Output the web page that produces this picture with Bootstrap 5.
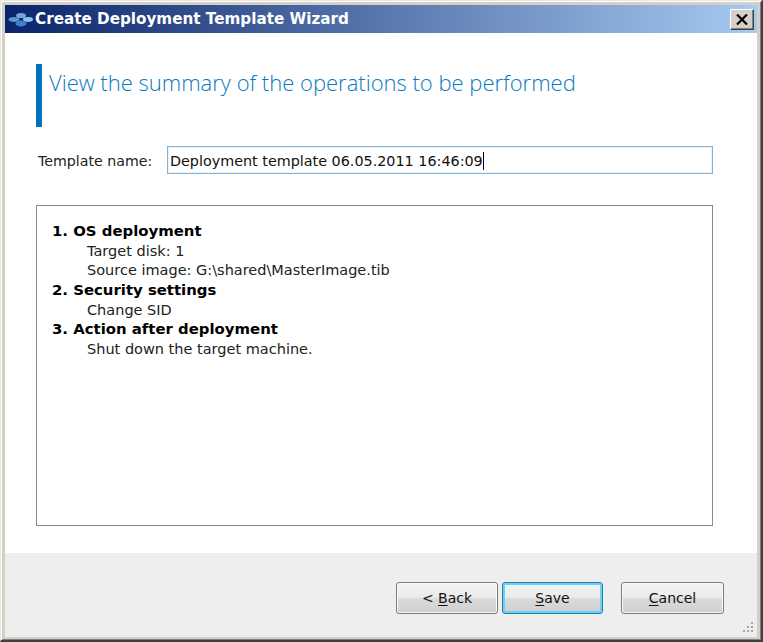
<!DOCTYPE html>
<html lang="en"><head><meta charset="utf-8"><title>Create Deployment Template Wizard</title>
<link href="https://cdn.jsdelivr.net/npm/bootstrap@5.3.0/dist/css/bootstrap.min.css" rel="stylesheet">
<style>
html,body{margin:0;padding:0;background:#d4d0c8;overflow:hidden}
body{font-family:"DejaVu Sans","Noto Sans",sans-serif;font-size:14.5px;color:#111}
.win-frame{width:763px;height:642px;display:flex;flex-direction:column;background:#d4d0c8;border-style:solid;border-width:1px 2px 2px 1px;border-color:#e8e6df #404040 #404040 #e8e6df;padding:4px 4px 3px 4px;box-shadow:inset 1px 1px 0 #fff,inset -1px -1px 0 #808080}
.title-bar{height:28px;flex:none;background:linear-gradient(90deg,#0a246a,#a6caf0);color:#fff;font-weight:700;font-size:15.2px;padding:1px 3px 0 2px}
.title-ico{width:27px;height:16px;flex:none;margin-right:1px}
.close-box{width:24px;height:21px;background:#d4d0c8;border:1px solid;border-color:#fff #404040 #404040 #fff;box-shadow:inset -1px -1px 0 #808080;padding:0;margin-top:-1px}
.wiz-body{flex:1;background:#fff;padding:31px 44px 0 31px;min-height:0}
.wiz-foot{height:84px;flex:none;background:#eee;padding:29px 33px 0 0}
.head-bar{border-left:6px solid #0072bc;height:63px;padding:2px 0 0 7px;font-family:"Open Sans","Noto Sans",sans-serif;font-size:22px;font-weight:300;color:#0a78c2;line-height:32px}
.name-row{margin-top:19px;height:28px;padding-left:2px}
.name-lab{width:129px;flex:none;font-size:14.2px;color:#222;padding-top:3px}
.name-wrap{flex:1;height:28px}
.name-inp{width:100%;height:28px;display:block;border:1px solid #7fb3d8;border-radius:0;padding:2px 2px 0;font:inherit;font-size:14.35px;color:#111;outline:0;box-shadow:inset 0 0 0 1px #eaf3fa;background:#fff}
.name-caret{left:316px;top:6px;width:1px;height:18px;background:#000}
.sum-box{margin-top:31px;height:321px;border:1px solid #8a8a8a;padding:16px 15px;line-height:19.7px;font-size:14.5px;color:#222}
.sum-h{font-weight:700;color:#000;font-size:14.9px}
.sum-i{padding-left:35px;line-height:18px;padding-bottom:1.7px}
.wiz-btn{width:102px;height:32px;border:1px solid #7a7a7a;border-radius:3px;background:linear-gradient(#f3f3f3 0,#ebebeb 48%,#dcdcdc 50%,#cfcfcf 100%);font-size:14px;color:#111;padding:1px 0 0;box-shadow:inset 0 0 0 1px #fbfbfb}
.wiz-btn u{text-underline-offset:2px}
.wiz-btn.is-def{border-color:#1c7fb0;box-shadow:inset 0 0 0 2px #6fd0f5;margin-left:4px;width:101px}
.wiz-btn.gap-left{margin-left:18px;width:103px}
.grip{right:3px;bottom:3px;width:15px;height:15px}
</style></head><body>
<div class="win-frame">
 <div class="title-bar d-flex align-items-center">
  <svg class="title-ico" viewBox="0 0 27 16"><ellipse cx="14" cy="3.5" rx="5" ry="2.6" fill="#6fa6dc"/><ellipse cx="7" cy="7.5" rx="5.5" ry="2.4" fill="#5a94d2"/><ellipse cx="21" cy="7.5" rx="5" ry="2.4" fill="#8fc0ec"/><ellipse cx="14" cy="11.5" rx="5.5" ry="3" fill="#3f82cc"/></svg>
  <span class="flex-grow-1">Create Deployment Template Wizard</span>
  <button class="close-box d-flex align-items-center justify-content-center" aria-label="Close"><svg width="12" height="11" viewBox="0 0 12 11"><path d="M1 0.5 L11 10.5 M11 0.5 L1 10.5" stroke="#000" stroke-width="2.2"/></svg></button>
 </div>
 <div class="wiz-body">
  <div class="head-bar">View the summary of the operations to be performed</div>
  <div class="name-row d-flex align-items-center"><label class="name-lab" for="tn">Template name:</label><div class="name-wrap position-relative"><input id="tn" class="name-inp" value="Deployment template 06.05.2011 16:46:09"><span class="name-caret position-absolute"></span></div></div>
  <div class="sum-box">
   <div class="sum-h">1. OS deployment</div>
   <div class="sum-i">Target disk: 1</div>
   <div class="sum-i">Source image: G:\shared\MasterImage.tib</div>
   <div class="sum-h">2. Security settings</div>
   <div class="sum-i">Change SID</div>
   <div class="sum-h">3. Action after deployment</div>
   <div class="sum-i">Shut down the target machine.</div>
  </div>
 </div>
 <div class="wiz-foot position-relative d-flex justify-content-end align-items-start">
  <button class="wiz-btn">&lt; <u>B</u>ack</button>
  <button class="wiz-btn is-def"><u>S</u>ave</button>
  <button class="wiz-btn gap-left"><u>C</u>ancel</button>
  <svg class="grip position-absolute" viewBox="0 0 15 15" fill="#a8a498"><rect x="12" y="3" width="2" height="2"/><rect x="8" y="7" width="2" height="2"/><rect x="12" y="7" width="2" height="2"/><rect x="4" y="11" width="2" height="2"/><rect x="8" y="11" width="2" height="2"/><rect x="12" y="11" width="2" height="2"/></svg>
 </div>
</div>
</body></html>
